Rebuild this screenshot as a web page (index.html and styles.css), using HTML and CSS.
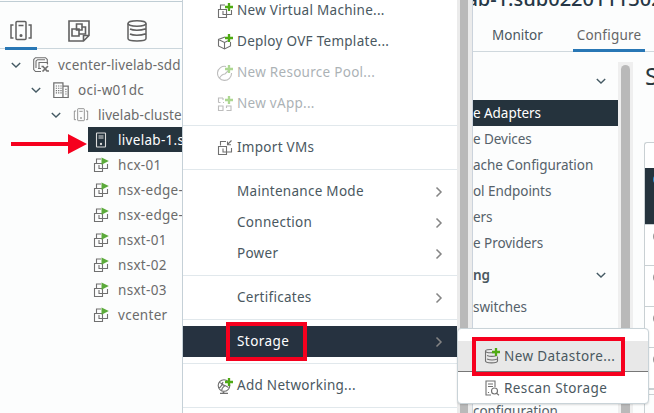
FILE: index.html
```
<!DOCTYPE html>
<html lang="en">
<head>
<meta charset="utf-8">
<title>vSphere Client</title>
<link rel="stylesheet" href="styles.css">
</head>
<body>
<svg class="defs" aria-hidden="true">
  <symbol id="down" viewBox="0 0 12 8"><path d="M1.8 2 6 6l4.200-4"/></symbol>
  <symbol id="right" viewBox="0 0 8 12"><path d="M1.500 1.500 6 6l-4.500 4.500"/></symbol>
  <symbol id="cluster" viewBox="0 0 24 22"><rect x="7" y="1.500" width="10" height="18" rx="1"/><path d="M9.500 5.500h5M4.500 5H2v13h2.500M19.500 5H22v13h-2.500"/><circle cx="12" cy="15.500" r=".8"/></symbol>
  <symbol id="vms" viewBox="0 0 22 22"><path d="M1 1h20v14.500L15.500 21H1zM21 15.500h-5.500V21"/><path d="M8.500 4H14v6H8.500zM14 7h3.500v7H11M4 9h7v7H4z"/></symbol>
  <symbol id="db" viewBox="0 0 20 22"><ellipse cx="10" cy="3.500" rx="9" ry="2.700"/><path d="M1 3.500v15c0 3.300 18 3.300 18 0v-15M3 9c3 1.600 10 1.800 16-.3M3 14c3 1.600 10 1.800 16-.3"/></symbol>
  <symbol id="datastore" viewBox="0 0 16 16"><path d="M8 1.500C4 1.300 1.500 2 1.500 3S4 4.800 7 4.800c2 0 4-.2 5.500-.8M1.500 3v10c0 2.500 12 2.500 12 0V8.500M3 7.500c3 1.200 7 1 10 0M3 11c3 1.200 7.500 1 10.500 0"/></symbol>
  <symbol id="vcenter" viewBox="0 0 16 16"><path d="M8 14.500H2.500L.7 12.500V2.500L2.500.7h10l1.800 1.800V7M3 11V4l1.500-1.300H12M6 11.500V5.500h8.500v2M8 11.500H5"/><path class="heavy" d="m9.500 9 5 5.500M15 9l-5.500 5.500M8.500 9.500h2M14 14h2"/></symbol>
  <symbol id="dc" viewBox="0 0 14 14"><path d="M.7.700h8v13h-8zM8.700 3.700h4.600v10H8.700"/><path class="dots" d="M3 3v8M5 3v8M7 3v8M11.300 6v6"/></symbol>
  <symbol id="host" viewBox="0 0 12 16"><rect x="1.500" y="1" width="9" height="14" rx=".5"/><path d="M3.500 4h5M3.500 6h5"/><circle cx="6" cy="12" r=".6"/></symbol>
  <symbol id="vm" viewBox="0 0 16 16"><path d="M8 2H3.500v4M1.500 6.500h8V14.500h-8zM6 8v3.500h8.500V7M9.500 9v2"/></symbol>
  <symbol id="play" viewBox="0 0 16 16"><path class="go" d="M8.500.500 15.800 4 8.500 7.800z"/></symbol>
  <symbol id="plus" viewBox="0 0 16 16"><path class="add" d="M12 0v8M8 4h8"/></symbol>
  <symbol id="cube" viewBox="0 0 16 16"><path d="M8 3 1.500 5.500v6.500L7.500 15l6-3V8M1.500 5.500l6 3 3.500-1.700M7.500 8.500V15"/></symbol>
  <symbol id="pool" viewBox="0 0 16 16"><path d="M9 1.500A7 7 0 1 0 14.500 8M2.500 13c2.500-4 4-4 5.500-4l4-4"/></symbol>
  <symbol id="vapp" viewBox="0 0 16 16"><path d="M6 2H1.500v4.500M1.500 6.500h2M6 2v2M1.500 10v4.500H6V10zM9.500 14.500H14V10H9.500v2M6 6.500h1"/></symbol>
  <symbol id="import" viewBox="0 0 16 16"><path d="M9 1.500H3.500v4M1.500 6.500h8v8h-8zM6 8.500V12h8.500V8M9.500 9v2M14.500.500l-4 4M10.500 1.500v3.200h3.500"/></symbol>
  <symbol id="net" viewBox="0 0 16 16"><circle cx="7" cy="7.500" r="5.800"/><path d="M2 4.500c3 0 3 3 6 3l3.500 2M5 12.500c-1-2 1-3 3-5M2 10c2-1 3-3 4-6"/><path class="heavy" d="M6.500 13.500v2M3 15.500h8"/></symbol>
  <symbol id="scan" viewBox="0 0 16 16"><path d="M7 15H2V1h9v6M4 4h5M4 6.500h5M4.500 12v1"/><circle cx="10.500" cy="11" r="3"/><path d="m12.500 13.200 2.500 2"/></symbol>
</svg>

<div class="app">
  <aside class="inventory">
    <nav class="views">
      <span class="view active"><svg class="w24"><use href="#cluster"/></svg></span>
      <span class="view"><svg class="w22"><use href="#vms"/></svg></span>
      <span class="view"><svg class="w20"><use href="#db"/></svg></span>
    </nav>
    <div class="tree">
      <div class="node l1"><svg class="chev"><use href="#down"/></svg><svg class="ico"><use href="#vcenter"/></svg><span>vcenter-livelab-sdd</span></div>
      <div class="node l2"><svg class="chev"><use href="#down"/></svg><svg class="ico"><use href="#dc"/></svg><span>oci-w01dc</span></div>
      <div class="node l3"><svg class="chev"><use href="#down"/></svg><svg class="ico"><use href="#cluster"/></svg><span>livelab-cluste</span></div>
      <div class="node leaf selected"><svg class="ico"><use href="#host"/></svg><span>livelab-1.su</span></div>
      <div class="node leaf"><svg class="ico"><use href="#vm"/><use href="#play"/></svg><span>hcx-01</span></div>
      <div class="node leaf"><svg class="ico"><use href="#vm"/><use href="#play"/></svg><span>nsx-edge-</span></div>
      <div class="node leaf"><svg class="ico"><use href="#vm"/><use href="#play"/></svg><span>nsx-edge-</span></div>
      <div class="node leaf"><svg class="ico"><use href="#vm"/><use href="#play"/></svg><span>nsxt-01</span></div>
      <div class="node leaf"><svg class="ico"><use href="#vm"/><use href="#play"/></svg><span>nsxt-02</span></div>
      <div class="node leaf"><svg class="ico"><use href="#vm"/><use href="#play"/></svg><span>nsxt-03</span></div>
      <div class="node leaf"><svg class="ico"><use href="#vm"/><use href="#play"/></svg><span>vcenter</span></div>
    </div>
  </aside>

  <div class="menu">
    <div class="item"><svg class="ico"><use href="#vm"/><use href="#plus"/></svg><span>New Virtual Machine...</span></div>
    <div class="item"><svg class="ico"><use href="#cube"/><use href="#plus"/></svg><span>Deploy OVF Template...</span></div>
    <div class="item off"><svg class="ico"><use href="#pool"/><use href="#plus"/></svg><span>New Resource Pool...</span></div>
    <div class="item off"><svg class="ico"><use href="#vapp"/><use href="#plus"/></svg><span>New vApp...</span></div>
    <hr>
    <div class="item"><svg class="ico"><use href="#import"/></svg><span>Import VMs</span></div>
    <hr>
    <div class="item sub"><span>Maintenance Mode</span><svg class="more"><use href="#right"/></svg></div>
    <div class="item sub"><span>Connection</span><svg class="more"><use href="#right"/></svg></div>
    <div class="item sub"><span>Power</span><svg class="more"><use href="#right"/></svg></div>
    <hr>
    <div class="item sub"><span>Certificates</span><svg class="more"><use href="#right"/></svg></div>
    <hr>
    <div class="item sub open"><span>Storage</span><svg class="more"><use href="#right"/></svg></div>
    <hr>
    <div class="item"><svg class="ico"><use href="#net"/><use href="#plus"/></svg><span>Add Networking...</span></div>
    <hr>
  </div>
  <div class="menubar"></div>

  <main class="detail">
    <h1><span>lab-1.sub0220111302</span></h1>
    <nav class="tabs"><span class="tab">Monitor</span><span class="tab active">Configure</span></nav>
    <div class="body">
      <div class="config">
        <div class="group"><span></span><svg class="chev"><use href="#down"/></svg></div>
        <div class="link current"><span>e Adapters</span></div>
        <div class="link"><span>e Devices</span></div>
        <div class="link"><span>ache Configuration</span></div>
        <div class="link"><span>ol Endpoints</span></div>
        <div class="link"><span>ers</span></div>
        <div class="link"><span>e Providers</span></div>
        <div class="group"><span>ng</span><svg class="chev"><use href="#down"/></svg></div>
        <div class="link"><span>switches</span></div>
        <div class="link"></div>
        <div class="link"></div>
        <div class="link"></div>
        <div class="link"><span>configuration</span></div>
      </div>
      <div class="scroll"><div class="thumb"></div></div>
      <section class="page">
        <h2>S</h2>
        <div class="grid">
          <div class="head"></div>
          <div class="row picked"><i></i></div>
          <div class="row"><i></i></div>
          <div class="row"><i></i></div>
          <div class="row"><i></i></div>
          <div class="row"><i></i></div>
        </div>
        <div class="below"></div>
      </section>
    </div>
  </main>
</div>

<div class="submenu">
  <div class="item hover"><svg class="ico"><use href="#datastore"/><use href="#plus"/></svg><span>New Datastore...</span></div>
  <div class="item"><svg class="ico"><use href="#scan"/></svg><span>Rescan Storage</span></div>
</div>
<div class="mark mark-storage"></div>
<div class="mark mark-datastore"></div>
<svg class="arrow" viewBox="0 0 76 20"><path d="M0 8h57V0l19 10-19 10v-8H0z"/></svg>
</body>
</html>
```
FILE: styles.css
```
* { box-sizing: border-box; }
body { margin: 0; width: 654px; height: 413px; overflow: hidden; position: relative; background: #fcfdfd; color: #4a585f; font: 13.500px/20px "Noto Sans", "Open Sans", sans-serif; }
span { white-space: nowrap; }
svg { display: block; flex: none; fill: none; stroke: #606060; stroke-width: 1.3; overflow: visible; }
.defs { position: absolute; width: 0; height: 0; }
.heavy { stroke-width: 1.700; }
.dots { stroke-dasharray: 1 1; }
.go { fill: #5cab3b; stroke: none; }
.add { stroke: #4faa13; stroke-width: 2.300; }
.app { display: flex; height: 413px; }
.ico { width: 16px; height: 16px; stroke: #707070; stroke-width: 1.1; }
.chev { width: 12px; height: 8px; stroke: #455a64; stroke-width: 1.400; }

.inventory { width: 183px; flex: none; overflow: hidden; border-right: 1px solid #c5d0d7; padding-top: 1px; }
.views { display: flex; height: 48px; border-top: 1px solid #bfcdd4; border-bottom: 1px solid #cbd6dc; padding-left: 5px; gap: 26px; }
.view { width: 32px; height: 48px; display: flex; justify-content: center; padding-top: 18px; }
.view.active { border-bottom: 3px solid #2877b5; }
.w24 { width: 24px; height: 22px; stroke-width: 1.500; }
.w22 { width: 22px; height: 22px; stroke-width: 1.600; }
.w20 { width: 20px; height: 22px; stroke-width: 1.500; }
.tree { padding-top: 3px; color: #6b6b6b; letter-spacing: .3px; }
.node { display: flex; align-items: center; height: 25px; }
.node .chev { margin-right: 11px; }
.node .ico { margin-right: 9px; }
.l1 { padding-left: 10px; letter-spacing: .15px; }
.l2 { padding-left: 30px; }
.l3 { padding-left: 50px; letter-spacing: .1px; }
.leaf { padding-left: 5px; margin-left: 88px; }
.selected { background: #25333d; color: #fff; }
.selected .ico { stroke: #ddd; }

.menu { width: 274px; flex: none; background: #fff; margin-top: -5px; letter-spacing: .28px; }
.item { display: flex; align-items: center; height: 31px; padding-left: 34px; }
.item span { margin-top: -1px; }
.item .ico { margin-right: 4px; }
.item.sub { padding: 0 14px 0 54px; justify-content: space-between; }
.more { width: 8px; height: 12px; stroke: #858585; stroke-width: 1.500; }
.menu hr { height: 1px; border: 0; background: #e1e8ec; margin: 6px 0; }
.off { opacity: .46; }
.item.open { background: #263240; color: #fff; letter-spacing: .45px; }
.menubar { width: 15px; flex: none; border: solid #ebebeb; border-width: 0 4px 0 3px; background: #b9b9b9; }

.detail { flex: 1; min-width: 0; overflow: hidden; border-left: 1px solid #cbd3dc; }
h1 { margin: 0; height: 18px; display: flex; font-size: 20px; font-weight: 500; line-height: 24px; color: #263746; }
h1 span { margin: -13px 0 0 -12px; }
.tabs { display: flex; height: 34px; border-bottom: 1px solid #cfd8dd; padding-left: 19px; gap: 24px; }
.tab { width: 57px; line-height: 34px; }
.tab.active { width: 72px; height: 34px; text-align: center; border-bottom: 3px solid #2877b5; color: #666; letter-spacing: .2px; }
.body { display: flex; height: 361px; }
.config { width: 145px; flex: none; overflow: hidden; padding-top: 10px; }
.group { display: flex; align-items: center; justify-content: space-between; height: 38px; padding-right: 11px; font-weight: 600; }
.link { height: 26px; line-height: 26px; color: #55616a; letter-spacing: -.05px; }
.link.current { background: #25333d; color: #fff; }
.scroll { width: 15px; flex: none; margin-top: 10px; background: #efefef; padding: 3px 3px 0; }
.thumb { height: 360px; width: 9px; border-radius: 5px; background: #b9b9b9; }
.page { flex: 1; min-width: 0; overflow: hidden; padding: 10px 0 0 11px; }
h2 { margin: -1px 0 0 1px; height: 81px; font-size: 24px; font-weight: 400; line-height: 30px; color: #29383f; }
.grid { border: 1px solid #c9d0d3; border-right: 0; border-radius: 3px 0 0 3px; background: #fff; }
.head { height: 25px; }
.row { height: 41px; padding: 8px 0 0 8px; border-bottom: 1px solid #c9d0d3; }
.row.picked { height: 57px; background: #25333d; }
.row i { display: block; width: 3px; height: 7px; border: 1px solid #999; border-right: 0; border-radius: 3px 0 0 3px; }
.row.picked i { border-color: #2f8ed0; }
.below { height: 20px; margin-top: 4px; border: 1px solid #c9d0d3; border-width: 1px 0 0 1px; }

.submenu { position: absolute; left: 457px; top: 328px; width: 192px; height: 76px; padding: 12px 0; background: #fff; border: 1px solid #c9d3d8; border-radius: 4px; box-shadow: 0 1px 2px #0002; letter-spacing: .4px; }
.submenu .item { padding-left: 26px; }
.submenu .item span { margin-top: 0; }
.submenu .hover { background: #e8e8e8; border-bottom: 1px solid #777; }
.mark { position: absolute; border: 4px solid #f6001e; }
.mark-storage { left: 226px; top: 322px; width: 81px; height: 39px; }
.mark-datastore { left: 472px; top: 337px; width: 153px; height: 39px; }
.arrow { position: absolute; left: 11px; top: 134px; width: 76px; height: 20px; fill: #f6001e; stroke: none; }
```
